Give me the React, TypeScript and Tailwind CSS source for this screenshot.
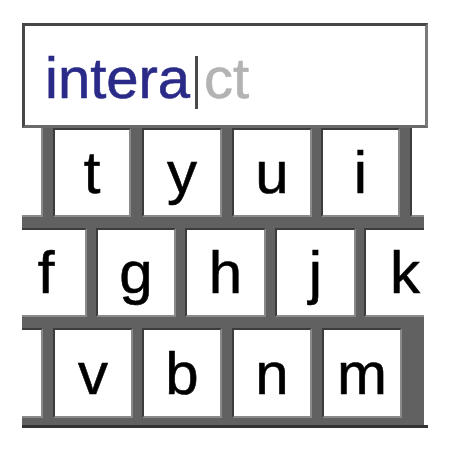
import React from 'react';

type Seg =
  | { kind: 'key'; w: string; label: string; edge?: string }
  | { kind: 'bar'; w: string }
  | { kind: 'blank'; w: string; edge: string };

const KEY = 'bg-white border-2 border-t-[#3c3c3c] border-l-[#3c3c3c] border-b-[#8a8a8a] border-r-[#8a8a8a]';

const rows: { h: string; segs: Seg[] }[] = [
  {
    h: 'h-[89px]',
    segs: [
      { kind: 'blank', w: 'w-[21px]', edge: 'border-r-2 border-r-[#8a8a8a] border-b-2 border-b-[#8a8a8a]' },
      { kind: 'bar', w: 'w-[10px]' },
      { kind: 'key', w: 'w-[78px]', label: 't' },
      { kind: 'bar', w: 'w-[11px]' },
      { kind: 'key', w: 'w-[80px]', label: 'y' },
      { kind: 'bar', w: 'w-[10px]' },
      { kind: 'key', w: 'w-[80px]', label: 'u' },
      { kind: 'bar', w: 'w-[9px]' },
      { kind: 'key', w: 'w-[79px]', label: 'i' },
      { kind: 'bar', w: 'w-[10px]' },
      { kind: 'blank', w: 'w-[14px]', edge: 'border-l-2 border-l-[#3c3c3c] border-b-2 border-b-[#8a8a8a]' },
    ],
  },
  {
    h: 'h-[89px]',
    segs: [
      { kind: 'key', w: 'w-[65px]', label: 'f', edge: 'border-l-0 pr-[15px]' },
      { kind: 'bar', w: 'w-[9px]' },
      { kind: 'key', w: 'w-[80px]', label: 'g' },
      { kind: 'bar', w: 'w-[9px]' },
      { kind: 'key', w: 'w-[81px]', label: 'h' },
      { kind: 'bar', w: 'w-[9px]' },
      { kind: 'key', w: 'w-[81px]', label: 'j' },
      { kind: 'bar', w: 'w-[8px]' },
      { kind: 'key', w: 'w-[60px]', label: 'k', edge: 'border-r-0 pl-[20px]' },
    ],
  },
  {
    h: 'h-[90px]',
    segs: [
      { kind: 'blank', w: 'w-[21px]', edge: 'border-t-2 border-t-[#3c3c3c] border-r-2 border-r-[#8a8a8a] border-b-2 border-b-[#8a8a8a]' },
      { kind: 'bar', w: 'w-[10px]' },
      { kind: 'key', w: 'w-[80px]', label: 'v' },
      { kind: 'bar', w: 'w-[9px]' },
      { kind: 'key', w: 'w-[80px]', label: 'b' },
      { kind: 'bar', w: 'w-[10px]' },
      { kind: 'key', w: 'w-[80px]', label: 'n' },
      { kind: 'bar', w: 'w-[10px]' },
      { kind: 'key', w: 'w-[80px]', label: 'm' },
      { kind: 'bar', w: 'w-[22px]' },
    ],
  },
];

const Row: React.FC<{ h: string; segs: Seg[] }> = ({ h, segs }) => (
  <div className={`flex ${h}`}>
    {segs.map((s, i) => {
      if (s.kind === 'bar') return <div key={i} className={`${s.w} shrink-0 bg-[#616161]`} />;
      if (s.kind === 'blank') return <div key={i} className={`${s.w} shrink-0 bg-white ${s.edge}`} />;
      return (
        <div
          key={i}
          className={`${s.w} shrink-0 ${KEY} ${s.edge ?? ''} flex items-center justify-center pt-[1px] text-[60px] leading-none text-black [-webkit-text-stroke:0.6px_#000]`}
        >
          {s.label}
        </div>
      );
    })}
  </div>
);

const Bar: React.FC = () => <div className="h-[11px] bg-[#616161]" />;

export default function App() {
  return (
    <div className="w-[452px] h-[456px] bg-white pt-[23px] pl-[22px] font-['Liberation_Sans',Arial,sans-serif]">
      <div className="w-[406px] h-[105px] bg-white border-[3px] border-t-[#474747] border-l-[#474747] border-r-[#7a7a7a] border-b-[#6a6a6a] pl-[20px] pt-[23px] text-[58px] leading-none whitespace-nowrap">
        <span className="text-[#2a2a88] [-webkit-text-stroke:0.6px_#2a2a88]">intera</span>
        <span className="inline-block w-[3px] h-[53px] bg-[#4a4a4a] ml-[5px] mr-[6px] align-[-11px]" />
        <span className="text-[#b3b3b3] [-webkit-text-stroke:0.6px_#b3b3b3]">ct</span>
      </div>
      <div className="w-[402px]">
        <Row {...rows[0]} />
        <Bar />
        <Row {...rows[1]} />
        <Bar />
        <Row {...rows[2]} />
        <div className="h-[7px] bg-[#616161]" />
      </div>
      <div className="w-[406px] h-[3px] bg-[#333]" />
    </div>
  );
}
